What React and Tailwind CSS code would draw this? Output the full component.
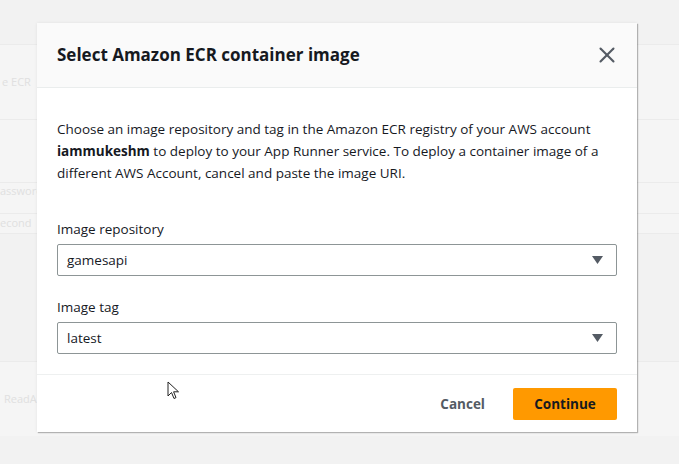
import { X } from 'lucide-react';

const font = { fontFamily: '"Open Sans", "Noto Sans", Arial, sans-serif' };

function SelectBox({ value }) {
  return (
    <div className="flex h-8 items-center justify-between rounded-[2px] border border-[#8d9596] bg-white pl-[9px] pr-[13px] text-[13.5px] text-[#16191f]">
      <span>{value}</span>
      <svg width="11" height="8" viewBox="0 0 11 8">
        <path d="M0 0 L11 0 L5.5 8 Z" fill="#545b64" />
      </svg>
    </div>
  );
}

function Cursor() {
  return (
    <svg width="14" height="20" viewBox="0 0 14 20" className="absolute left-[167px] top-[381px]">
      <path d="M1 1 L1 15 L4.5 11.5 L7 17.5 L9 16.6 L6.6 10.8 L11.5 10.8 Z" fill="#fff" stroke="#222" strokeWidth="1" strokeLinejoin="round" />
    </svg>
  );
}

export default function App() {
  return (
    <div className="relative h-[464px] w-[679px] overflow-hidden bg-[#f2f2f2]" style={font}>
      {/* faded page behind the modal */}
      <div className="flex flex-col pt-[44px] text-[11px] text-[#e0e0e0]">
        <div className="flex h-[75px] items-center border-t border-[#ebebeb] bg-[#f5f5f5] pl-[2px]">e ECR</div>
        <div className="h-[63px] border-t border-[#ebebeb] bg-[#f5f5f5]" />
        <div className="flex h-[31px] items-start border-t border-[#ebebeb] bg-[#f5f5f5]">assword</div>
        <div className="flex h-[20px] items-center border-t border-[#ebebeb] bg-[#f5f5f5]">econd</div>
        <div className="h-[128px] border-t border-[#ebebeb]" />
        <div className="flex h-[75px] items-center border-t border-[#ebebeb] bg-[#f5f5f5] pl-[4px]">ReadA</div>
      </div>

      {/* modal */}
      <div className="absolute left-[37px] top-[23px] flex w-[600px] flex-col bg-white shadow-[1px_1px_1px_rgba(0,0,0,0.25),0_0_3px_rgba(0,0,0,0.08)]">
        <div className="flex h-[65px] items-center justify-between border-b border-[#eaeded] bg-[#fafafa] pl-5 pr-[17px]">
          <h2 className="text-[17px] font-bold text-[#16191f]">Select Amazon ECR container image</h2>
          <X className="h-[26px] w-[26px] text-[#545b64]" strokeWidth={1.9} />
        </div>

        <div className="flex flex-col px-5 pb-5 pt-[30px] text-[13.5px] leading-[22px] text-[#16191f]">
          <p>
            Choose an image repository and tag in the Amazon ECR registry of your AWS account{' '}
            <span className="font-bold">iammukeshm</span> to deploy to your App Runner service. To deploy a container image of a different AWS Account, cancel and paste the image URI.
          </p>
          <div className="mt-[34px] mb-1">Image repository</div>
          <SelectBox value="gamesapi" />
          <div className="mt-5 mb-1">Image tag</div>
          <SelectBox value="latest" />
        </div>

        <div className="flex items-center justify-end gap-2 border-t border-[#eef0f0] px-5 pb-3 pt-[13px]">
          <button className="h-8 px-5 text-[13.5px] font-bold text-[#545b64]">Cancel</button>
          <button className="h-8 w-[104px] rounded-[2px] bg-[#ff9900] text-[13.5px] font-bold text-[#16191f]">Continue</button>
        </div>
      </div>

      <Cursor />
    </div>
  );
}
